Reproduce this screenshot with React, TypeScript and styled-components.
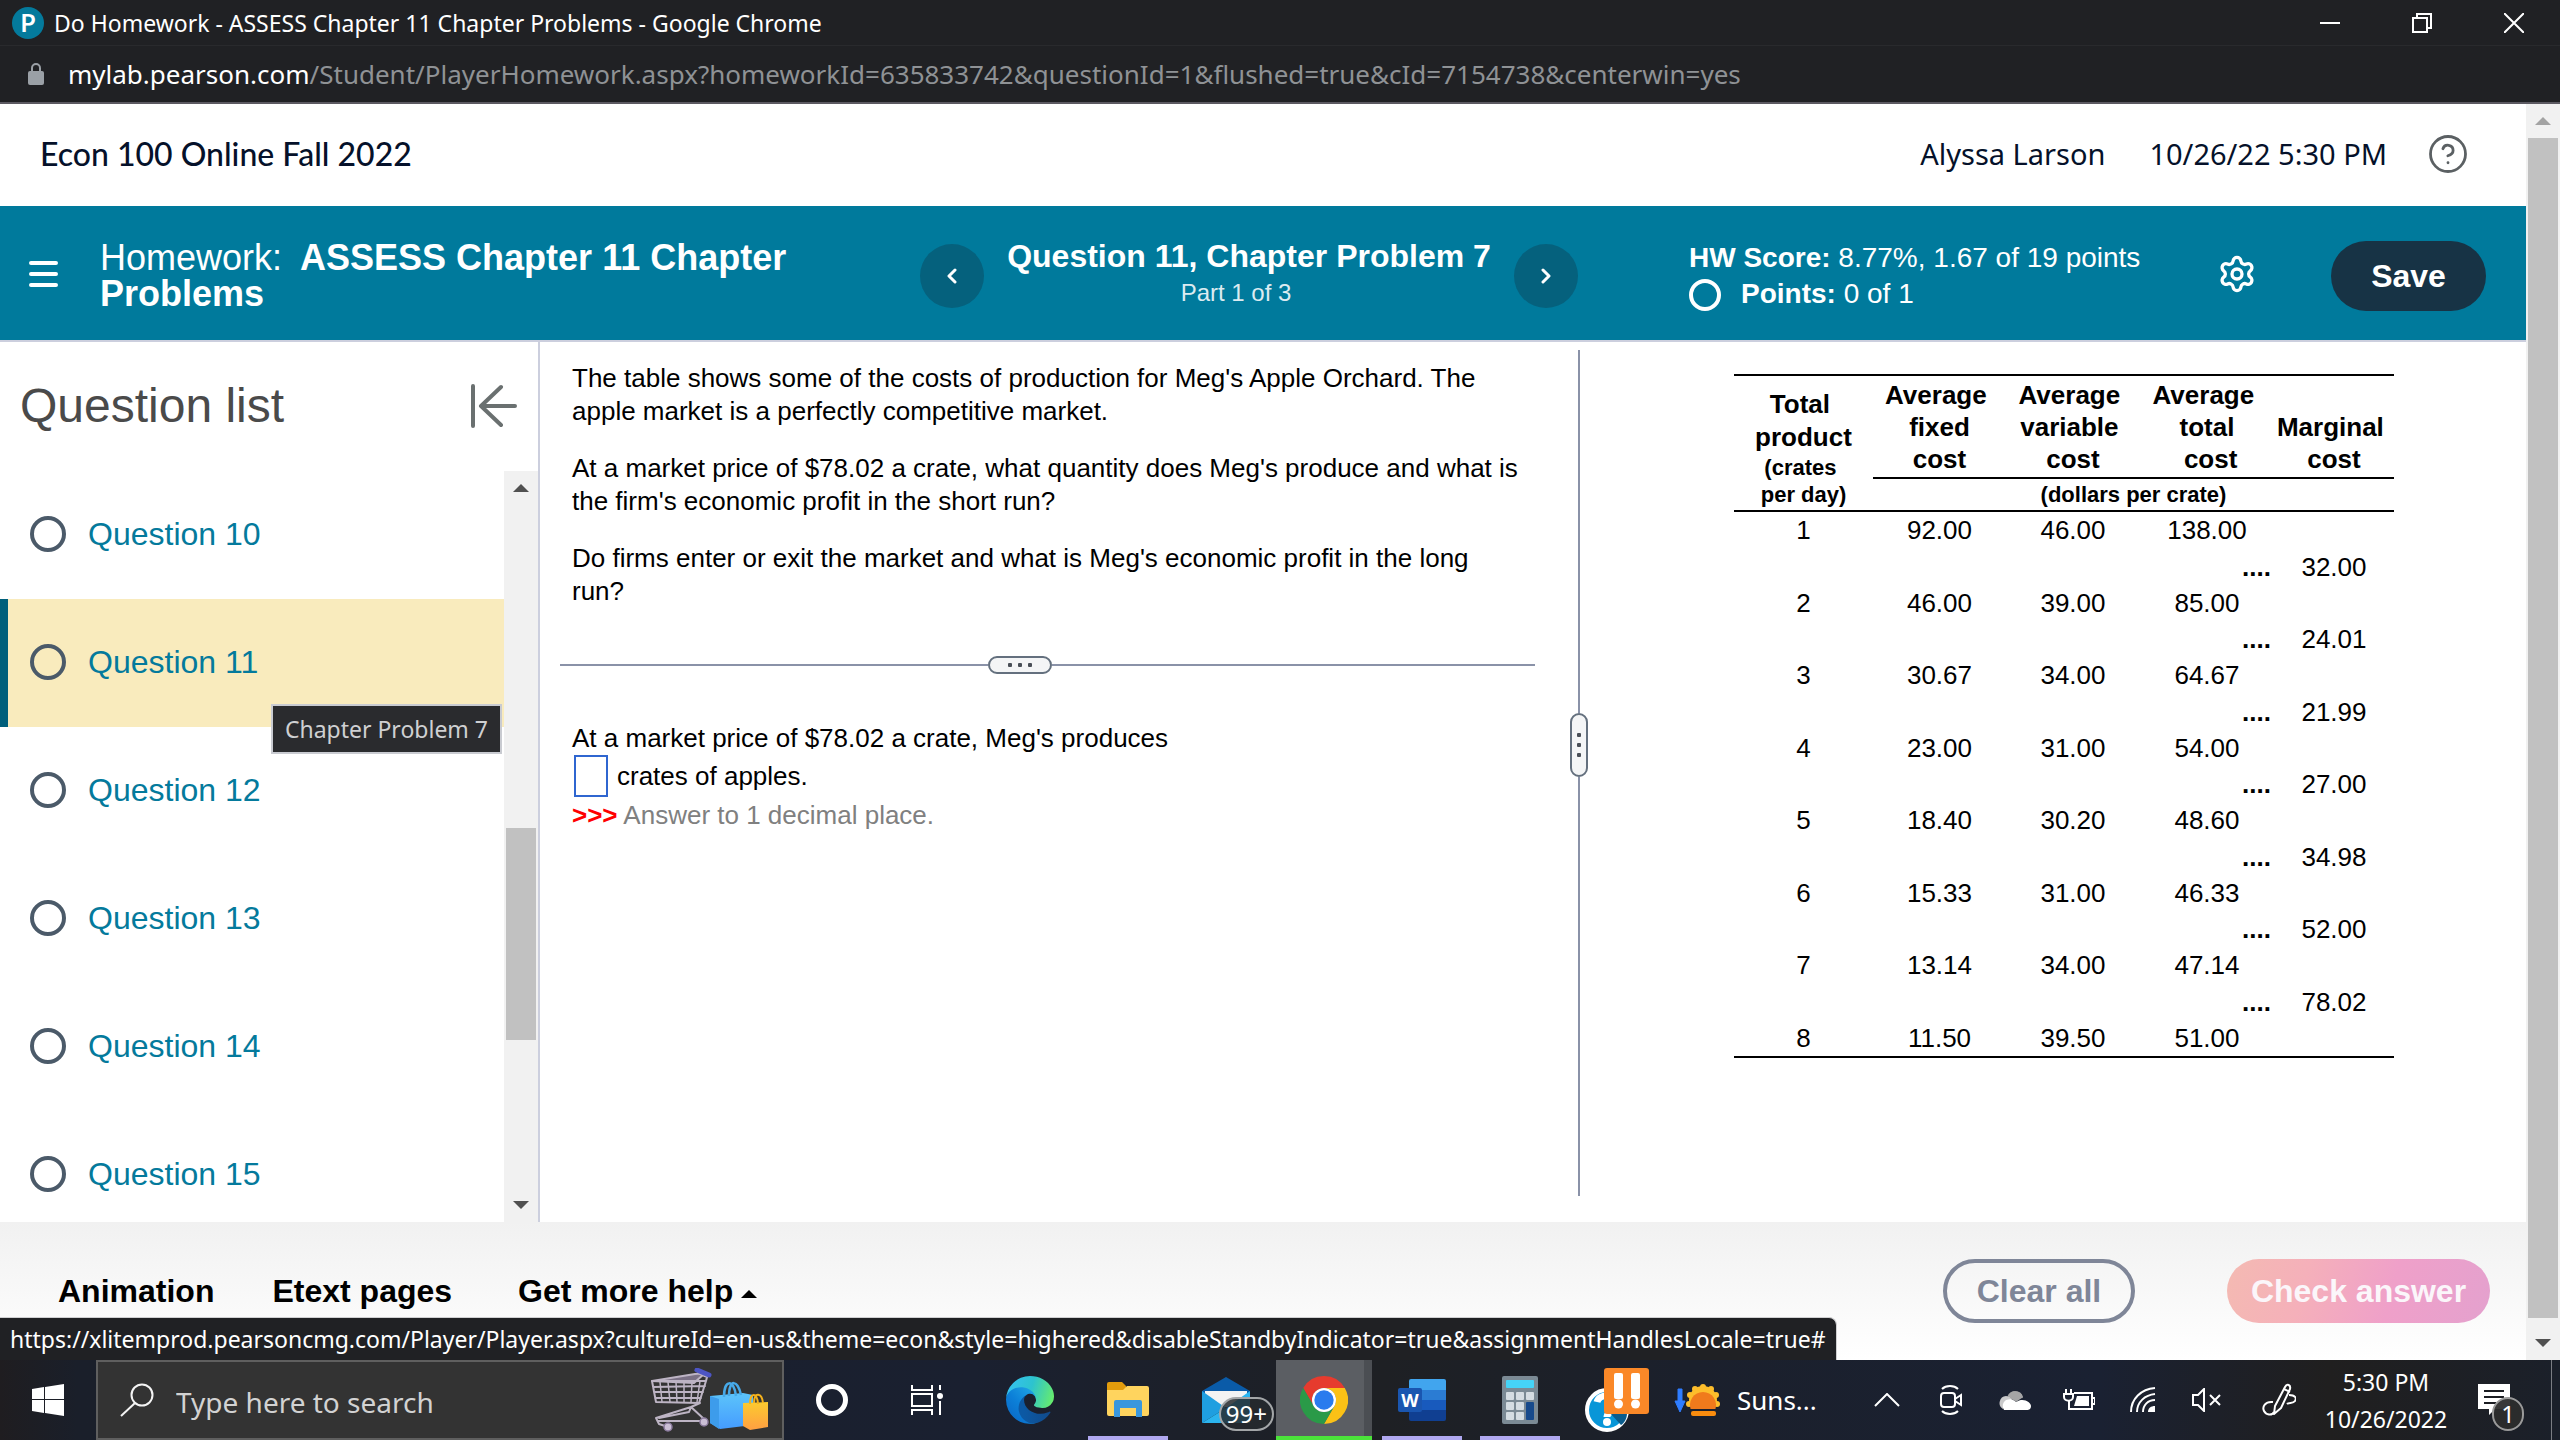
import React from 'react';
import styled, { createGlobalStyle, css } from 'styled-components';
import { CircleHelp, Settings } from 'lucide-react';

const ARIAL = '"Liberation Sans", Arial, sans-serif';
const SEGOE = '"Noto Sans", "Open Sans", sans-serif';
const HEADING = 'Lato, sans-serif';

const GlobalStyle = createGlobalStyle`
  *, *::before, *::after { box-sizing: border-box; }
  body { margin: 0; background: #ffffff; font-family: ${ARIAL}; color: #000000; }
  button { border: 0; padding: 0; background: none; color: inherit; font: inherit; }
  a { color: inherit; text-decoration: none; }
  h1, h2, p { margin: 0; font-weight: 400; }
  svg { display: block; }
`;

/* ---------- browser window ---------- */

const Desktop = styled.div`
  display: flex;
  flex-direction: column;
  height: 100vh;
  overflow: hidden;
`;

const TitleBar = styled.header`
  display: flex;
  align-items: center;
  flex: none;
  height: 46px;
  padding-left: 12px;
  background: #202124;
  border-bottom: 1px solid #292a2d;
  color: #ffffff;
  font: 23px/32px ${SEGOE};
`;

const Favicon = styled.span`
  display: grid;
  place-items: center;
  width: 32px;
  height: 32px;
  margin-right: 10px;
  border-radius: 50%;
  background: #047a9c;
  font: 700 24px/32px ${HEADING};
`;

const WindowTitle = styled.span`
  flex: 1;
`;

const WindowButton = styled.button`
  display: grid;
  place-items: center;
  width: 92px;
  height: 42px;
`;

const AddressBar = styled.div`
  display: flex;
  align-items: center;
  flex: none;
  gap: 24px;
  height: 58px;
  padding-left: 28px;
  background: #202124;
  border-bottom: 2px solid #5c5a62;
  color: #9aa0a6;
`;

const Address = styled.span`
  color: #8f9295;
  font: 26px/36px ${SEGOE};

  b { color: #ffffff; font-weight: 400; }
`;

const Viewport = styled.div`
  position: relative;
  display: flex;
  flex: 1;
  min-height: 0;
`;

const Page = styled.div`
  display: flex;
  flex: 1;
  flex-direction: column;
  min-width: 0;
`;

/* ---------- scroll bars ---------- */

const Track = styled.div`
  display: flex;
  flex: none;
  flex-direction: column;
  width: 34px;
  background: #f1f1f1;
`;

const TrackButton = styled.button`
  display: grid;
  flex: none;
  place-items: center;
  height: 34px;
`;

const TrackGap = styled.div<{ $grow: number }>`
  flex: ${(p) => p.$grow} 1 0;
`;

const Thumb = styled.div<{ $grow: number }>`
  flex: ${(p) => p.$grow} 1 0;
  margin: 0 2px;
  background: #c1c1c1;
`;

type ScrollbarProps = { before: number; size: number; after: number; upColor?: string };

function Scrollbar({ before, size, after, upColor = '#505050' }: ScrollbarProps) {
  return (
    <Track>
      <TrackButton aria-label="Scroll up">
        <svg width="16" height="8" viewBox="0 0 16 8"><path d="M0 8 8 0l8 8z" fill={upColor} /></svg>
      </TrackButton>
      <TrackGap $grow={before} />
      <Thumb $grow={size} />
      <TrackGap $grow={after} />
      <TrackButton aria-label="Scroll down">
        <svg width="16" height="8" viewBox="0 0 16 8"><path d="M0 0h16L8 8z" fill="#505050" /></svg>
      </TrackButton>
    </Track>
  );
}

/* ---------- course header ---------- */

const CourseBar = styled.div`
  display: flex;
  align-items: center;
  flex: none;
  gap: 44px;
  height: 102px;
  padding: 0 57px 2px 40px;
  color: #05112a;
  font: 29px/40px ${SEGOE};
`;

const CourseName = styled.h1`
  flex: 1;
  font: 500 32px/40px ${HEADING};
`;

const HelpButton = styled.button`
  margin-left: -4px;
  color: #5b6063;
`;

const HomeworkBar = styled.div`
  display: grid;
  grid-template-columns: 71px minmax(0, 820fr) 658px minmax(0, 639fr) 114px 155px;
  align-items: center;
  flex: none;
  height: 136px;
  padding: 6px 40px 0 29px;
  background: #007a9c;
  border-bottom: 2px solid #cccfde;
  color: #ffffff;
`;

const IconButton = styled.button`
  padding-bottom: 4px;
`;

const HomeworkTitle = styled.h2`
  padding-right: 24px;
  font-size: 36px;
  line-height: 36px;

  b { margin-left: 8px; }
`;

const QuestionNav = styled.nav`
  display: flex;
  align-items: center;
  justify-content: space-between;
`;

const NavCircle = styled.button`
  display: grid;
  place-items: center;
  width: 64px;
  height: 64px;
  border-radius: 50%;
  background: #05617d;
`;

const QuestionHeading = styled.div`
  padding-bottom: 2px;
  text-align: center;
  font-size: 32px;
  line-height: 36px;

  small { display: block; padding-right: 26px; font-size: 24px; line-height: 38px; color: #dcebf1; }
`;

const Score = styled.div`
  padding-left: 111px;
  font-size: 28px;
  line-height: 36px;
`;

const ScoreLine = styled.div`
  display: flex;
  align-items: center;
  gap: 20px;

  svg { margin-top: 2px; }
`;

const SaveButton = styled.button`
  height: 70px;
  border-radius: 35px;
  background: #173345;
  font-size: 32px;
  font-weight: 700;
`;

/* ---------- workspace ---------- */

const Workspace = styled.main`
  display: flex;
  flex: 1;
  min-height: 0;
`;

const Sidebar = styled.aside`
  display: flex;
  flex: none;
  flex-direction: column;
  width: 540px;
  border-right: 2px solid #cccfde;
`;

const SidebarHead = styled.div`
  display: flex;
  align-items: center;
  justify-content: space-between;
  flex: none;
  height: 129px;
  padding: 0 21px 2px 20px;
  color: #4a4a4a;

  h2 { font-size: 48px; line-height: 56px; }
`;

const ListFrame = styled.div`
  display: flex;
  flex: 1;
  min-height: 0;
`;

const List = styled.ul`
  flex: 1;
  margin: 0;
  padding: 0;
  overflow: hidden;
  list-style: none;
`;

const ListItem = styled.li<{ $current: boolean }>`
  position: relative;
  height: 128px;
  border-left: 8px solid transparent;
  ${(p) => p.$current && css`
    border-left-color: #005f7b;
    background: #f9ebbd;
  `}
`;

const QuestionLink = styled.a`
  display: flex;
  align-items: center;
  gap: 22px;
  height: 100%;
  padding: 0 0 2px 22px;
  color: #047a9c;
  font-size: 32px;
`;

const Tooltip = styled.span`
  position: absolute;
  z-index: 1;
  top: 105px;
  right: 2px;
  padding: 7px 12px;
  border: 2px solid #c9cbd1;
  background: #2a2b2e;
  color: #cfd0d2;
  font: 23px/32px ${SEGOE};
`;

const Panes = styled.div`
  display: grid;
  flex: 1;
  grid-template-columns: minmax(0, 1030fr) 18px minmax(0, 938fr);
  min-width: 0;
`;

const ProblemPane = styled.section`
  display: flex;
  flex-direction: column;
  gap: 48px;
  padding: 20px 35px 0 20px;
  font-size: 26px;
  line-height: 33px;
`;

const Prose = styled.div`
  display: flex;
  flex-direction: column;
  gap: 24px;
  padding: 0 16px 0 12px;
`;

const Answer = styled.div`
  padding-left: 12px;
`;

const AnswerRow = styled.div`
  display: flex;
  align-items: center;
  gap: 9px;
  height: 42px;
  padding-left: 2px;
`;

const AnswerInput = styled.input`
  width: 34px;
  height: 42px;
  padding: 0 4px;
  border: 2px solid #2f66d0;
  background: #ffffff;
  font: 26px/33px ${ARIAL};
`;

const Hint = styled.p`
  padding-top: 2px;
  color: #808080;

  b { color: #ff0000; }
`;

const Splitter = styled.div<{ $vertical?: boolean }>`
  display: flex;
  align-items: center;
  flex-direction: ${(p) => (p.$vertical ? 'column' : 'row')};
  ${(p) => p.$vertical && css`margin: 8px 0 26px;`}
`;

const Rule = styled.span<{ $grow: number }>`
  flex: ${(p) => p.$grow} 1 0;
  min-width: 2px;
  min-height: 2px;
  background: #8a92a8;
`;

const Grip = styled.button<{ $vertical?: boolean }>`
  display: flex;
  flex: none;
  flex-direction: ${(p) => (p.$vertical ? 'column' : 'row')};
  align-items: center;
  justify-content: center;
  gap: 6px;
  width: ${(p) => (p.$vertical ? 18 : 64)}px;
  height: ${(p) => (p.$vertical ? 64 : 18)}px;
  border: 2px solid #64707e;
  border-radius: 9px;
  background: #f4f5f6;

  i { width: 4px; height: 4px; border-radius: 1px; background: #4a4f57; }
`;

const TablePane = styled.section`
  padding: 32px 0 0 14px;
`;

const CostTable = styled.table`
  width: 660px;
  margin: 0 auto;
  border-spacing: 0;
  border-bottom: 2px solid #000000;
  table-layout: fixed;
  font-size: 26px;
  line-height: 36px;
  text-align: center;

  th, td { padding: 0; }
  thead tr:first-child th {
    height: 105px;
    padding-bottom: 2px;
    border-top: 2px solid #000000;
    border-bottom: 2px solid #000000;
    line-height: 32px;
    vertical-align: bottom;
  }
  thead tr:first-child th:first-child { line-height: 33px; }
  thead small { display: block; font-size: 22px; line-height: 27px; }
  thead tr:last-child th {
    height: 33px;
    border-bottom: 2px solid #000000;
    font-size: 22px;
    line-height: 31px;
  }
  tbody td { height: 36px; }
  tbody tr:nth-child(4n + 2) td { height: 37px; }
`;

const Dots = styled.td`
  font-weight: 700;
  text-align: right;

  && { padding-right: 3px; }
`;

/* ---------- page footer ---------- */

const FooterBar = styled.footer`
  display: flex;
  align-items: center;
  flex: none;
  gap: 58px;
  padding: 37px 36px 37px 58px;
  background: linear-gradient(#f1f1f1, #ffffff);
  font-size: 32px;
  font-weight: 700;
  line-height: 36px;
`;

const HelpMenuButton = styled.button`
  display: flex;
  align-items: center;
  gap: 8px;
  padding-left: 8px;

  svg { margin-top: 6px; }
`;

const ActionButton = styled.button<{ $primary?: boolean }>`
  height: 64px;
  border-radius: 32px;
  ${(p) => p.$primary
    ? css`
        width: 263px;
        margin-left: 34px;
        background: linear-gradient(105deg, #f4bab2, #f5b0ba 30%, #efa0c9 62%, #e4a1ce);
        color: #fbf6fa;
      `
    : css`
        width: 192px;
        margin-left: auto;
        border: 4px solid #7f8698;
        color: #7f8698;
      `}
`;

const StatusBubble = styled.div`
  position: absolute;
  bottom: 0;
  left: 0;
  padding: 5px 10px;
  border-top: 1px solid #d0d0d2;
  border-right: 1px solid #d0d0d2;
  border-top-right-radius: 8px;
  background: #202124;
  color: #ffffff;
  font: 23px/32px ${SEGOE};
  white-space: nowrap;
`;

/* ---------- taskbar ---------- */

const Taskbar = styled.footer`
  display: flex;
  align-items: stretch;
  flex: none;
  height: 80px;
  background: linear-gradient(90deg, #1f1d20, #1a1f2a 3%, #1a2030 38%, #1e2024 54%, #1b202c 66%, #1a2132 82%, #201f1f 91%, #1b202a);
  color: #ffffff;
  font-family: ${SEGOE};
`;

const TaskButton = styled.button<{ $width?: number }>`
  position: relative;
  display: grid;
  place-items: center;
  flex: none;
  width: ${(p) => p.$width ?? 96}px;
`;

const SearchBox = styled.label`
  display: flex;
  align-items: center;
  flex: none;
  width: 688px;
  padding: 0 12px 0 22px;
  border: 2px solid #5f5f5f;
  background: #333333;
`;

const SearchInput = styled.input`
  flex: 1;
  min-width: 0;
  margin: 4px 0 0 22px;
  padding: 0;
  border: 0;
  outline: 0;
  background: none;
  color: #ffffff;
  font: 28px/40px ${SEGOE};

  &::placeholder { color: #d2d2d2; opacity: 1; }
`;

const Apps = styled.div`
  display: flex;
  gap: 2px;
  padding-left: 6px;
`;

const AppButton = styled(TaskButton)<{ $active?: boolean; $line?: string }>`
  ${(p) => p.$active && css`background: linear-gradient(90deg, #5b5e63 88px, #4b4e53 88px);`}

  &::after {
    content: '';
    position: absolute;
    bottom: 0;
    left: ${(p) => (p.$active ? 0 : 8)}px;
    right: ${(p) => (p.$active ? 0 : 8)}px;
    height: 4px;
    background: ${(p) => p.$line ?? 'transparent'};
  }
`;

const CountBadge = styled.span`
  position: absolute;
  right: 0;
  bottom: 9px;
  padding: 0 5px;
  border: 2px solid #a3a6a8;
  border-radius: 17px;
  background: rgba(38, 42, 46, 0.85);
  font-size: 24px;
  line-height: 30px;
`;

const AlertBadge = styled.span`
  position: absolute;
  left: 34px;
  top: 8px;
`;

const NoticeBadge = styled.span`
  position: absolute;
  top: 37px;
  left: 39px;
  width: 32px;
  height: 34px;
  border: 2px solid #9a9a9a;
  border-radius: 17px;
  background: rgba(45, 45, 45, 0.94);
  font-size: 24px;
  line-height: 30px;
`;

const Weather = styled.button`
  display: flex;
  align-items: center;
  gap: 17px;
  padding-left: 8px;
  font-size: 26px;
  line-height: 36px;
`;

const Tray = styled.div`
  display: flex;
  margin-left: auto;
`;

const Clock = styled.div`
  width: 134px;
  padding-top: 4px;
  font-size: 23px;
  line-height: 37px;
  text-align: center;
`;

const ShowDesktop = styled.button`
  width: 9px;
  margin-left: 16px;
  border-left: 1px solid #7b7d83;
`;

/* ---------- drawings ---------- */

const LockIcon = () => (
  <svg width="16" height="22" viewBox="0 0 16 22">
    <rect y="8" width="16" height="14" rx="2" fill="#9aa0a6" />
    <path d="M4 9V5a4 4 0 0 1 8 0v4" fill="none" stroke="#9aa0a6" strokeWidth="2" />
  </svg>
);

const Chevron = ({ right = false }: { right?: boolean }) => (
  <svg width="10" height="16" viewBox="0 0 10 16" fill="none" stroke="#ffffff" strokeWidth="3" strokeLinecap="round" strokeLinejoin="round">
    <path d={right ? 'M2 2l6 6-6 6' : 'M8 2 2 8l6 6'} />
  </svg>
);

const Ring = ({ size, color, stroke }: { size: number; color: string; stroke: number }) => (
  <svg width={size} height={size} viewBox={`0 0 ${size} ${size}`}>
    <circle cx={size / 2} cy={size / 2} r={(size - stroke) / 2} fill="none" stroke={color} strokeWidth={stroke} />
  </svg>
);

const CartAndBags = () => (
  <svg width="120" height="64" viewBox="0 0 120 64">
    <defs>
      <linearGradient id="bagBlue" x1="0" y1="0" x2="0" y2="1"><stop stopColor="#5cc4fa" /><stop offset="1" stopColor="#459cff" /></linearGradient>
      <linearGradient id="bagGold" x1="0" y1="0" x2="0" y2="1"><stop stopColor="#fccb2f" /><stop offset="1" stopColor="#ff9f42" /></linearGradient>
    </defs>
    <g fill="none" stroke="#bdb4c4" strokeWidth="2" strokeLinejoin="round" strokeLinecap="round">
      <path d="M2 13l43-7 10-1-11 10z" fill="#7a7085" />
      <path d="M2 13l4 21 43 1 7-22 1-4-9-4M2 13l54 0M3 19l52-1M4 24l49 0M5 30l46 0" />
      <path d="M10 14l2 20M18 14l2 20M26 14l1 20M34 14l0 20M42 14l-1 20M50 13l-3 21" strokeWidth="1.5" />
      <path d="M50 35l-9 4 13 12v4M41 39L6 50l3 6 6 2M8 53l44 0M41 39l-2 5-30 6" />
    </g>
    <path d="M47 2l12 5" stroke="#4d55c4" strokeWidth="5" strokeLinecap="round" />
    <circle cx="18" cy="59" r="4" fill="#cbbfd6" stroke="#8b7b9e" strokeWidth="1.5" />
    <circle cx="54" cy="54" r="4" fill="#cbbfd6" stroke="#8b7b9e" strokeWidth="1.5" />
    <path d="M60 28l33-3 10 2v30l-33 4-10-6z" fill="url(#bagBlue)" />
    <path d="M60 28l9 3v30l-9-6z" fill="#3d9ceb" />
    <path d="M74 29c0-18 10-18 12-1M79 28c0-18 9-16 12-1" fill="none" stroke="#47a9e8" strokeWidth="2.5" />
    <path d="M93 35l25-1v25l-18 3-7-4z" fill="url(#bagGold)" />
    <path d="M100 36c0-12 7-12 8 0M104 35c0-12 8-10 9 0" fill="none" stroke="#f5b21c" strokeWidth="2" />
  </svg>
);

const WindowsIcon = () => (
  <svg width="32" height="32" viewBox="0 0 32 32" fill="#ffffff">
    <path d="M0 5l12-2v12H0zM13 3l19-3v15H13zM0 16h12v13L0 27zM13 16h19v16l-19-3z" />
  </svg>
);

const SearchIcon = () => (
  <svg width="34" height="34" viewBox="0 0 34 34" fill="none" stroke="#f4f4f4" strokeWidth="2">
    <circle cx="22" cy="12" r="10.5" />
    <path d="M15 20 1 33" />
  </svg>
);

const TaskViewIcon = () => (
  <svg width="34" height="30" viewBox="0 0 34 30" fill="none" stroke="#ffffff" strokeWidth="2">
    <path d="M1 0v5h20V0M1 9h20v12H1zM1 30v-5h20v5M29 0v5M29 16v14" />
    <circle cx="29" cy="11" r="3" fill="#ffffff" stroke="none" />
  </svg>
);

const EdgeIcon = () => (
  <svg width="48" height="48" viewBox="0 0 256 256">
    <defs>
      <linearGradient id="edgeDeep" x1="0.2" y1="0.5" x2="1" y2="0.5"><stop stopColor="#0c59a4" /><stop offset="1" stopColor="#114a8b" /></linearGradient>
      <linearGradient id="edgeBlue" x1="0.8" y1="0.2" x2="0.2" y2="0.9"><stop stopColor="#1b9de2" /><stop offset="0.5" stopColor="#0c80d8" /><stop offset="1" stopColor="#0a6cc9" /></linearGradient>
      <linearGradient id="edgeGreen" x1="0" y1="0.4" x2="1" y2="0.6"><stop stopColor="#35c1f1" /><stop offset="0.5" stopColor="#2dc3cf" /><stop offset="1" stopColor="#66eb6e" /></linearGradient>
    </defs>
    <path fill="url(#edgeDeep)" transform="translate(-4.63 -4.92)" d="M235.68 195.46a93.73 93.73 0 0 1-10.54 4.71 101.87 101.87 0 0 1-35.9 6.46c-47.32 0-88.54-32.55-88.54-74.32A31.48 31.48 0 0 1 117.13 105c-42.8 1.8-53.8 46.4-53.8 72.53 0 73.88 68.09 81.37 82.76 81.37 7.91 0 19.84-2.3 27-4.56l1.31-.44a128.34 128.34 0 0 0 66.6-52.8 4 4 0 0 0-5.32-5.64z" />
    <path fill="url(#edgeBlue)" d="M105.73 241.42A79.2 79.2 0 0 1 83 220.08a80.72 80.72 0 0 1 29.5-120.79c3.12-1.47 8.45-4.13 15.54-4a32.35 32.35 0 0 1 25.69 13 31.88 31.88 0 0 1 6.36 18.66c0-.21 24.46-79.6-80-79.6-43.9 0-80 41.66-80 78.21a130.15 130.15 0 0 0 12.11 56 128 128 0 0 0 156.38 67.11 75.55 75.55 0 0 1-62.78-8z" />
    <path fill="url(#edgeGreen)" d="M152.33 148.86c-.81 1.05-3.3 2.5-3.3 5.66 0 2.61 1.7 5.12 4.72 7.23 14.38 10 41.49 8.68 41.56 8.68a59.56 59.56 0 0 0 30.27-8.35 61.38 61.38 0 0 0 30.43-52.88c.26-22.41-8-37.31-11.34-43.91C223.46 24 177.67 0 128 0A128 128 0 0 0 0 126.2c.48-36.54 36.8-66.05 80-66.05 3.5 0 23.46.34 42 10.07 16.34 8.58 24.9 18.94 30.85 29.21 6.18 10.67 7.28 24.15 7.28 29.52s-2.74 13.33-7.8 19.91z" />
  </svg>
);

const FolderIcon = () => (
  <svg width="42" height="36" viewBox="0 0 42 36">
    <path d="M0 2a2 2 0 0 1 2-2h13l4 4v6H0z" fill="#e39c0c" />
    <path d="M0 8h16l4-4h20a2 2 0 0 1 2 2v26a2 2 0 0 1-2 2H2a2 2 0 0 1-2-2z" fill="#ffd45e" />
    <path d="M7 35V20a2 2 0 0 1 2-2h24a2 2 0 0 1 2 2v15h-6v-9H13v9z" fill="#3a97dd" />
  </svg>
);

const MailIcon = () => (
  <svg width="48" height="46" viewBox="0 0 48 46">
    <path d="M0 14 24 0l24 14v6H0z" fill="#0a5ba8" />
    <path d="M3 14h42v16H3z" fill="#f3f3f3" />
    <path d="M0 14l24 17-24 15z" fill="#1f9fe0" />
    <path d="M48 14 24 31 0 46h48z" fill="#2bb4ee" />
  </svg>
);

const ChromeIcon = () => (
  <svg width="48" height="48" viewBox="0 0 48 48">
    <path fill="#e63b2e" d="M24 12h20.785A24 24 0 0 0 3.215 12l10.393 18A12 12 0 0 1 24 12z" />
    <path fill="#fbc116" d="M44.785 12A24 24 0 0 1 24 48l10.392-18A12 12 0 0 0 24 12z" />
    <path fill="#2a9a48" d="M24 48A24 24 0 0 1 3.215 12l10.393 18a12 12 0 0 0 20.784 0z" />
    <circle cx="24" cy="24" r="12" fill="#ffffff" />
    <circle cx="24" cy="24" r="9.7" fill="#2a7bee" />
  </svg>
);

const WordFrame = styled.span`
  position: relative;

  span {
    position: absolute;
    left: 0;
    top: 9px;
    width: 24px;
    font: 700 18px/24px ${SEGOE};
    text-align: center;
  }
`;

const WordIcon = () => (
  <WordFrame>
    <svg width="48" height="42" viewBox="0 0 48 42">
      <path d="M11 2a2 2 0 0 1 2-2h33a2 2 0 0 1 2 2v9H11z" fill="#41a5ee" />
      <path d="M11 11h37v10H11z" fill="#2b7cd3" />
      <path d="M11 21h37v10H11z" fill="#185abd" />
      <path d="M11 31h37v9a2 2 0 0 1-2 2H13a2 2 0 0 1-2-2z" fill="#103f91" />
      <rect y="9" width="24" height="24" rx="2" fill="#1a56b0" />
    </svg>
    <span>W</span>
  </WordFrame>
);

const CalculatorIcon = () => (
  <svg width="36" height="48" viewBox="0 0 36 48">
    <rect width="36" height="48" rx="2" fill="#7b8a95" />
    <rect x="4" y="4" width="28" height="8" rx="1" fill="#45d3f7" />
    <g fill="#d5dde3">
      <rect x="4" y="16" width="8" height="8" rx="1" /><rect x="14" y="16" width="8" height="8" rx="1" /><rect x="24" y="16" width="8" height="8" rx="1" />
      <rect x="4" y="26" width="8" height="8" rx="1" /><rect x="14" y="26" width="8" height="8" rx="1" />
      <rect x="4" y="36" width="8" height="8" rx="1" /><rect x="14" y="36" width="8" height="8" rx="1" />
    </g>
    <rect x="24" y="26" width="8" height="18" rx="1" fill="#174a8c" />
  </svg>
);

const SupportIcon = () => (
  <svg width="96" height="80" viewBox="0 0 96 80">
    <circle cx="37" cy="50" r="20" fill="#0896d8" stroke="#ffffff" strokeWidth="4" />
    <path d="M27 42c2-8 17-9 19 0 1 8-9 9-9 15" fill="none" stroke="#ffffff" strokeWidth="7" />
    <path d="M40 53h17c0 6-3 10-6 12z" fill="#0a5c8c" />
    <circle cx="37" cy="62" r="4" fill="#ffffff" />
  </svg>
);

const AlertIcon = () => (
  <svg width="45" height="46" viewBox="0 0 45 46">
    <rect width="45" height="46" rx="3" fill="#fa8828" />
    <g fill="#ffffff">
      <rect x="10" y="5" width="9" height="26" rx="2" /><circle cx="14.500" cy="36" r="4.500" />
      <rect x="27" y="5" width="9" height="26" rx="2" /><circle cx="31.500" cy="36" r="4.500" />
    </g>
  </svg>
);

const SunsetIcon = () => (
  <svg width="46" height="32" viewBox="0 0 46 32">
    <path d="M4 5h4v12h3L6 28 1 17h3z" fill="#2f7dff" stroke="#2f7dff" strokeLinejoin="round" />
    <g fill="#fdbd2b">
      <circle cx="29" cy="16" r="14" />
      <circle cx="29" cy="3" r="3" /><circle cx="21" cy="5" r="3" /><circle cx="37" cy="5" r="3" /><circle cx="16" cy="11" r="3" /><circle cx="42" cy="11" r="3" /><circle cx="15" cy="20" r="3" /><circle cx="43" cy="20" r="3" />
    </g>
    <path d="M17 26a13 13 0 1 1 24 0z" fill="#f07a1c" />
    <rect x="14" y="25" width="30" height="2" fill="#1b202c" />
    <rect x="17" y="27" width="25" height="5" rx="2" fill="#fa8c0e" />
  </svg>
);

const CaretUpIcon = () => (
  <svg width="26" height="14" viewBox="0 0 26 14" fill="none" stroke="#ffffff" strokeWidth="2"><path d="M1 13 13 1l12 12" /></svg>
);

const MeetIcon = () => (
  <svg width="24" height="30" viewBox="0 0 24 30" fill="none" stroke="#ffffff" strokeWidth="2">
    <rect x="2" y="8" width="14" height="14" rx="3" />
    <path d="M16 14l6-4v10l-6-4M3 4c4-4 12-4 16 0M3 26c4 4 12 4 16 0" />
  </svg>
);

const CloudIcon = () => (
  <svg width="32" height="20" viewBox="0 0 32 20">
    <path d="M8 10a8 8 0 0 1 16-2z" fill="#8f8f90" />
    <path d="M7 6a8 8 0 0 1 6 3l-9 10a7 7 0 0 1 3-13z" fill="#c9c9ca" />
    <path d="M5 20a7 7 0 0 1 2-10c6-2 8 0 10 2 7-5 15 0 15 4s-3 4-5 4z" fill="#ffffff" />
    <path d="M9 6a8 8 0 0 1 15 1l-7 5z" fill="#a5a5a6" />
  </svg>
);

const BatteryIcon = () => (
  <svg width="32" height="22" viewBox="0 0 32 22" fill="none" stroke="#ffffff" strokeWidth="2">
    <path d="M11 4h18v16H6v-8M30 9h2v6h-2" />
    <path d="M14 7h12v10H11z" fill="#ffffff" stroke="none" />
    <path d="M3 0v4M8 0v4M1 5h9v3c0 5-9 5-9 0zM6 12v8" />
  </svg>
);

const WifiIcon = () => (
  <svg width="26" height="26" viewBox="0 0 26 26" fill="none" stroke="#ffffff" strokeWidth="2">
    <path d="M1 25C1 12 11 2 25 1M7 25C7 15 15 8 25 7M13 25c0-7 5-12 12-12" />
    <path d="M18 25c0-4 3-6 7-6v6z" fill="#ffffff" stroke="none" />
  </svg>
);

const MuteIcon = () => (
  <svg width="30" height="24" viewBox="0 0 30 24" fill="none" stroke="#ffffff" strokeWidth="2">
    <path d="M1 7h5l6-6v22l-6-6H1zM18 7l10 10M28 7 18 17" />
  </svg>
);

const PenIcon = () => (
  <svg width="34" height="34" viewBox="0 0 34 34" fill="none" stroke="#ffffff" strokeWidth="2" strokeLinejoin="round">
    <path d="M12 31l1-8L23 4c2-4 6-2 5 2l-9 19zM22 6l6 3" />
    <path d="M11 19C3 18 0 24 2 28s8 5 10 1M27 12c6 0 8 3 6 6s-6 1-8 3" />
  </svg>
);

const NoticeIcon = () => (
  <svg width="32" height="32" viewBox="0 0 32 32">
    <path d="M0 0h32v25H17l-6 6v-6H0z" fill="#ffffff" />
    <path d="M6 7h20M6 13h20M6 19h12" stroke="#1b1d22" strokeWidth="2" />
  </svg>
);

/* ---------- content ---------- */

const QUESTIONS = [10, 11, 12, 13, 14, 15];

const COSTS = [
  { product: 1, fixed: '92.00', variable: '46.00', total: '138.00', marginal: '32.00' },
  { product: 2, fixed: '46.00', variable: '39.00', total: '85.00', marginal: '24.01' },
  { product: 3, fixed: '30.67', variable: '34.00', total: '64.67', marginal: '21.99' },
  { product: 4, fixed: '23.00', variable: '31.00', total: '54.00', marginal: '27.00' },
  { product: 5, fixed: '18.40', variable: '30.20', total: '48.60', marginal: '34.98' },
  { product: 6, fixed: '15.33', variable: '31.00', total: '46.33', marginal: '52.00' },
  { product: 7, fixed: '13.14', variable: '34.00', total: '47.14', marginal: '78.02' },
  { product: 8, fixed: '11.50', variable: '39.50', total: '51.00', marginal: null },
];

const Col = styled.col<{ $width: number }>`
  width: ${(p) => p.$width}px;
`;

function CostsOfProduction() {
  return (
    <CostTable>
      <colgroup>
        <Col $width={139} />
        <Col $width={133} />
        <Col $width={134} />
        <Col $width={134} />
        <Col $width={120} />
      </colgroup>
      <thead>
        <tr>
          <th rowSpan={2}>Total&nbsp;<br />product<small>(crates&nbsp;<br />per day)</small></th>
          <th>Average&nbsp;<br />fixed<br />cost</th>
          <th>Average&nbsp;<br />variable&nbsp;<br />cost</th>
          <th>Average&nbsp;<br />total<br />&nbsp;cost</th>
          <th>Marginal&nbsp;<br />cost</th>
        </tr>
        <tr>
          <th colSpan={4}>(dollars per crate)</th>
        </tr>
      </thead>
      <tbody>
        {COSTS.map((row) => (
          <React.Fragment key={row.product}>
            <tr>
              <td>{row.product}</td>
              <td>{row.fixed}</td>
              <td>{row.variable}</td>
              <td>{row.total}</td>
              <td />
            </tr>
            {row.marginal && (
              <tr>
                <td colSpan={3} />
                <Dots>....</Dots>
                <td>{row.marginal}</td>
              </tr>
            )}
          </React.Fragment>
        ))}
      </tbody>
    </CostTable>
  );
}

export default function App() {
  return (
    <Desktop>
      <GlobalStyle />
      <TitleBar>
        <Favicon>P</Favicon>
        <WindowTitle>Do Homework - ASSESS Chapter 11 Chapter Problems - Google Chrome</WindowTitle>
        <WindowButton aria-label="Minimize">
          <svg width="20" height="20" viewBox="0 0 20 20"><path d="M0 10h20" stroke="#fff" strokeWidth="2" /></svg>
        </WindowButton>
        <WindowButton aria-label="Restore">
          <svg width="20" height="20" viewBox="0 0 20 20" fill="none" stroke="#fff" strokeWidth="2"><path d="M1 5h14v14H1zM5 5V1h14v14h-4" /></svg>
        </WindowButton>
        <WindowButton aria-label="Close">
          <svg width="20" height="20" viewBox="0 0 20 20" stroke="#fff" strokeWidth="2"><path d="M0 0l20 20M20 0 0 20" /></svg>
        </WindowButton>
      </TitleBar>
      <AddressBar>
        <LockIcon />
        <Address><b>mylab.pearson.com</b>/Student/PlayerHomework.aspx?homeworkId=635833742&amp;questionId=1&amp;flushed=true&amp;cId=7154738&amp;centerwin=yes</Address>
      </AddressBar>

      <Viewport>
        <Page>
          <CourseBar>
            <CourseName>Econ 100 Online Fall 2022</CourseName>
            <span>Alyssa Larson</span>
            <span>10/26/22 5:30 PM</span>
            <HelpButton aria-label="Help"><CircleHelp size={42} strokeWidth={1.6} /></HelpButton>
          </CourseBar>

          <HomeworkBar>
            <IconButton aria-label="Menu">
              <svg width="29" height="26" viewBox="0 0 29 26" stroke="#fff" strokeWidth="4" strokeLinecap="round"><path d="M2 2h25M2 13h25M2 24h25" /></svg>
            </IconButton>
            <HomeworkTitle>Homework: <b>ASSESS Chapter 11 Chapter Problems</b></HomeworkTitle>
            <QuestionNav>
              <NavCircle aria-label="Previous question"><Chevron /></NavCircle>
              <QuestionHeading><b>Question 11, Chapter Problem 7</b><small>Part 1 of 3</small></QuestionHeading>
              <NavCircle aria-label="Next question"><Chevron right /></NavCircle>
            </QuestionNav>
            <Score>
              <div><b>HW Score:</b> 8.77%, 1.67 of 19 points</div>
              <ScoreLine><Ring size={32} color="#ffffff" stroke={4} /><span><b>Points:</b> 0 of 1</span></ScoreLine>
            </Score>
            <IconButton aria-label="Settings"><Settings size={40} strokeWidth={2} /></IconButton>
            <SaveButton>Save</SaveButton>
          </HomeworkBar>

          <Workspace>
            <Sidebar>
              <SidebarHead>
                <h2>Question list</h2>
                <button aria-label="Collapse question list">
                  <svg width="46" height="44" viewBox="0 0 46 44" fill="none" stroke="#6a7070" strokeWidth="4" strokeLinecap="round" strokeLinejoin="round">
                    <path d="M2 2v40M44 22H10M30 3 10 22l20 19" />
                  </svg>
                </button>
              </SidebarHead>
              <ListFrame>
                <List>
                  {QUESTIONS.map((n) => (
                    <ListItem key={n} $current={n === 11}>
                      <QuestionLink href="#"><Ring size={36} color="#4b5a69" stroke={4} />Question {n}</QuestionLink>
                      {n === 11 && <Tooltip role="tooltip">Chapter Problem 7</Tooltip>}
                    </ListItem>
                  ))}
                </List>
                <Scrollbar before={323} size={212} after={148} />
              </ListFrame>
            </Sidebar>

            <Panes>
              <ProblemPane>
                <Prose>
                  <p>The table shows some of the costs of production for Meg's Apple Orchard. The apple market is a perfectly competitive market.</p>
                  <p>At a market price of $78.02 a crate, what quantity does Meg's produce and what is the firm's economic profit in the short run?</p>
                  <p>Do firms enter or exit the market and what is Meg's economic profit in the long run?</p>
                </Prose>
                <Splitter>
                  <Rule $grow={428} />
                  <Grip aria-label="Resize question area"><i /><i /><i /></Grip>
                  <Rule $grow={484} />
                </Splitter>
                <Answer>
                  <p>At a market price of $78.02 a crate, Meg's produces</p>
                  <AnswerRow>
                    <AnswerInput id="crates" />
                    <label htmlFor="crates">crates of apples.</label>
                  </AnswerRow>
                  <Hint><b>&gt;&gt;&gt;</b> Answer to 1 decimal place.</Hint>
                </Answer>
              </ProblemPane>
              <Splitter $vertical>
                <Rule $grow={363} />
                <Grip $vertical aria-label="Resize panes"><i /><i /><i /></Grip>
                <Rule $grow={419} />
              </Splitter>
              <TablePane>
                <CostsOfProduction />
              </TablePane>
            </Panes>
          </Workspace>

          <FooterBar>
            <a href="#">Animation</a>
            <a href="#">Etext pages</a>
            <HelpMenuButton>
              Get more help
              <svg width="16" height="8" viewBox="0 0 16 8"><path d="M0 8 8 0l8 8z" /></svg>
            </HelpMenuButton>
            <ActionButton>Clear all</ActionButton>
            <ActionButton $primary>Check answer</ActionButton>
          </FooterBar>
        </Page>
        <Scrollbar before={0} size={1180} after={8} upColor="#a3a3a3" />
        <StatusBubble>https://xlitemprod.pearsoncmg.com/Player/Player.aspx?cultureId=en-us&amp;theme=econ&amp;style=highered&amp;disableStandbyIndicator=true&amp;assignmentHandlesLocale=true#</StatusBubble>
      </Viewport>

      <Taskbar>
        <TaskButton aria-label="Start"><WindowsIcon /></TaskButton>
        <SearchBox>
          <SearchIcon />
          <SearchInput type="text" aria-label="Search" placeholder="Type here to search" />
          <CartAndBags />
        </SearchBox>
        <TaskButton aria-label="Cortana"><Ring size={32} color="#ffffff" stroke={5} /></TaskButton>
        <TaskButton aria-label="Task view"><TaskViewIcon /></TaskButton>
        <Apps>
          <AppButton aria-label="Edge"><EdgeIcon /></AppButton>
          <AppButton aria-label="File Explorer" $line="#b0a8f0"><FolderIcon /></AppButton>
          <AppButton aria-label="Mail"><MailIcon /><CountBadge>99+</CountBadge></AppButton>
          <AppButton aria-label="Chrome" $active $line="#4be33a"><ChromeIcon /></AppButton>
          <AppButton aria-label="Word" $line="#b0a8f0"><WordIcon /></AppButton>
          <AppButton aria-label="Calculator" $line="#b0a8f0"><CalculatorIcon /></AppButton>
          <AppButton aria-label="Support"><SupportIcon /><AlertBadge><AlertIcon /></AlertBadge></AppButton>
        </Apps>
        <Weather><SunsetIcon />Suns...</Weather>
        <Tray>
          <TaskButton $width={64} aria-label="Show hidden icons"><CaretUpIcon /></TaskButton>
          <TaskButton $width={64} aria-label="Meet now"><MeetIcon /></TaskButton>
          <TaskButton $width={64} aria-label="OneDrive"><CloudIcon /></TaskButton>
          <TaskButton $width={64} aria-label="Battery"><BatteryIcon /></TaskButton>
          <TaskButton $width={64} aria-label="Network"><WifiIcon /></TaskButton>
          <TaskButton $width={64} aria-label="Volume"><MuteIcon /></TaskButton>
          <TaskButton $width={80} aria-label="Pen"><PenIcon /></TaskButton>
          <Clock>5:30 PM<br />10/26/2022</Clock>
          <TaskButton $width={82} aria-label="Notifications"><NoticeIcon /><NoticeBadge>1</NoticeBadge></TaskButton>
          <ShowDesktop aria-label="Show desktop" />
        </Tray>
      </Taskbar>
    </Desktop>
  );
}
